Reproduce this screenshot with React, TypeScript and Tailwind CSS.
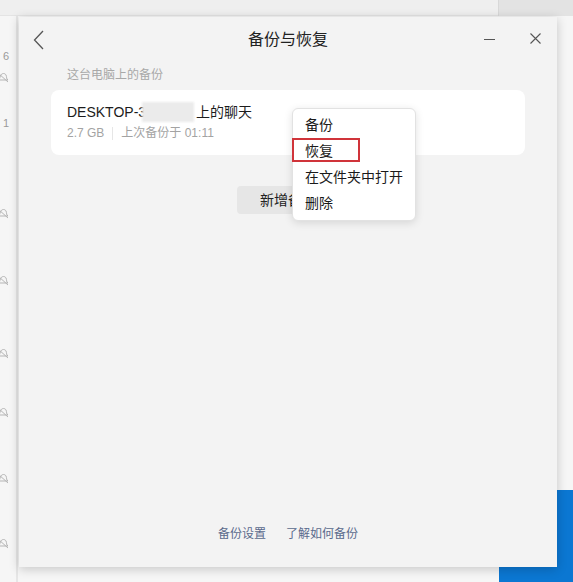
import React from "react";

const font = { fontFamily: '"Liberation Sans", "Noto Sans CJK SC", sans-serif' };

function BellOff({ top }: { top: number }) {
  return (
    <svg
      className="absolute"
      style={{ top, left: -3 }}
      width="12"
      height="12"
      viewBox="0 0 12 12"
      fill="none"
      stroke="#b5b5b5"
      strokeWidth="1"
    >
      <path d="M2 9 C3 7 3 5 4 4 C5 2 8 2 9 4 C10 6 9 8 11 9 Z" />
      <path d="M1 2 L11 11" />
    </svg>
  );
}

export default function App() {
  const bells = [71, 207, 274, 347, 406, 472, 537];
  return (
    <div className="relative w-[573px] h-[582px] bg-[#f6f6f6] overflow-hidden" style={font}>
      {/* background window fragments */}
      <div className="absolute left-0 top-0 w-[498px] h-[16px] bg-[#efefef] border-b border-[#e4e4e4]" />
      <div className="absolute left-[498px] top-0 w-[75px] h-[16px] bg-[#e3e3e3] border-l border-[#d8d8d8]" />
      <div className="absolute left-[16px] top-[16px] w-[2px] h-[566px] bg-[#e6e6e6]" />
      <div className="absolute left-[499px] top-[490px] w-[74px] h-[92px] bg-[#0b77d2]" />
      <div className="absolute left-[3px] top-[48px] text-[11px] text-[#9a9a9a]">6</div>
      <div className="absolute left-[3px] top-[115px] text-[11px] text-[#9a9a9a]">1</div>
      {bells.map((t) => (
        <BellOff key={t} top={t} />
      ))}

      {/* dialog */}
      <div className="absolute left-[19px] top-[17px] w-[538px] h-[550px] bg-[#f3f3f3] flex flex-col shadow-[0_2px_10px_rgba(0,0,0,0.2)]">
        <div className="relative h-[45px] flex items-center justify-center shrink-0">
          <svg className="absolute left-[14px] top-[13px]" width="12" height="20" viewBox="0 0 12 20" fill="none" stroke="#555" strokeWidth="1.3">
            <path d="M10 1 L1.5 10 L10 19" />
          </svg>
          <span className="text-[16px] text-[#222] mt-[1px]">备份与恢复</span>
          <div className="absolute left-[465px] top-[22px] w-[11px] h-[1px] bg-[#555]" />
          <svg className="absolute left-[511px] top-[16px]" width="11" height="11" viewBox="0 0 11 11" stroke="#555" strokeWidth="1.1">
            <path d="M0.5 0.5 L10.5 10.5 M10.5 0.5 L0.5 10.5" />
          </svg>
        </div>

        <div className="px-[32px] flex flex-col">
          <div className="mt-[5px] ml-[16px] h-[16px] leading-[16px] text-[12px] text-[#a8a8a8]">这台电脑上的备份</div>
          <div className="mt-[7px] h-[65px] bg-white rounded-[8px] pl-[16px] pt-[12px]">
            <div className="flex items-center h-[20px] text-[14px] text-[#1c1c1c]">
              <span>DESKTOP-3</span>
              <div className="ml-[-4px] w-[52px] h-[20px] bg-[#ebebeb] blur-[1px]" />
              <span className="ml-[2px]">上的聊天</span>
            </div>
            <div className="mt-[3px] flex items-center h-[16px] text-[12px] text-[#a3a3a3]">
              <span>2.7 GB</span>
              <div className="mx-[8px] w-[1px] h-[13px] bg-[#e6e6e6]" />
              <span>上次备份于 01:11</span>
            </div>
          </div>
          <div className="mt-[31px] self-center w-[102px] h-[28px] rounded-[4px] bg-[#e6e6e6] flex items-center justify-center text-[14px] text-[#222]">
            新增备份
          </div>
        </div>

        <div className="flex-1" />
        <div className="pb-[25px] flex justify-center gap-[20px] h-[16px] leading-[16px] text-[12px] text-[#5a6a8c] box-content">
          <span>备份设置</span>
          <span>了解如何备份</span>
        </div>
      </div>

      {/* context menu */}
      <div className="absolute left-[292px] top-[108px] w-[124px] h-[113px] bg-white rounded-[6px] border border-[#e2e2e2] shadow-[0_2px_8px_rgba(0,0,0,0.12)] pt-[4px] pb-[4px] flex flex-col text-[14px] text-[#1a1a1a]">
        <div className="h-[26px] flex items-center pl-[12px]">备份</div>
        <div className="h-[26px] flex items-center pl-[12px]">恢复</div>
        <div className="h-[26px] flex items-center pl-[12px]">在文件夹中打开</div>
        <div className="h-[26px] flex items-center pl-[12px]">删除</div>
        <div className="absolute left-[-1px] top-[29px] w-[68px] h-[24px] border-2 border-[#d0343a]" />
      </div>
    </div>
  );
}
